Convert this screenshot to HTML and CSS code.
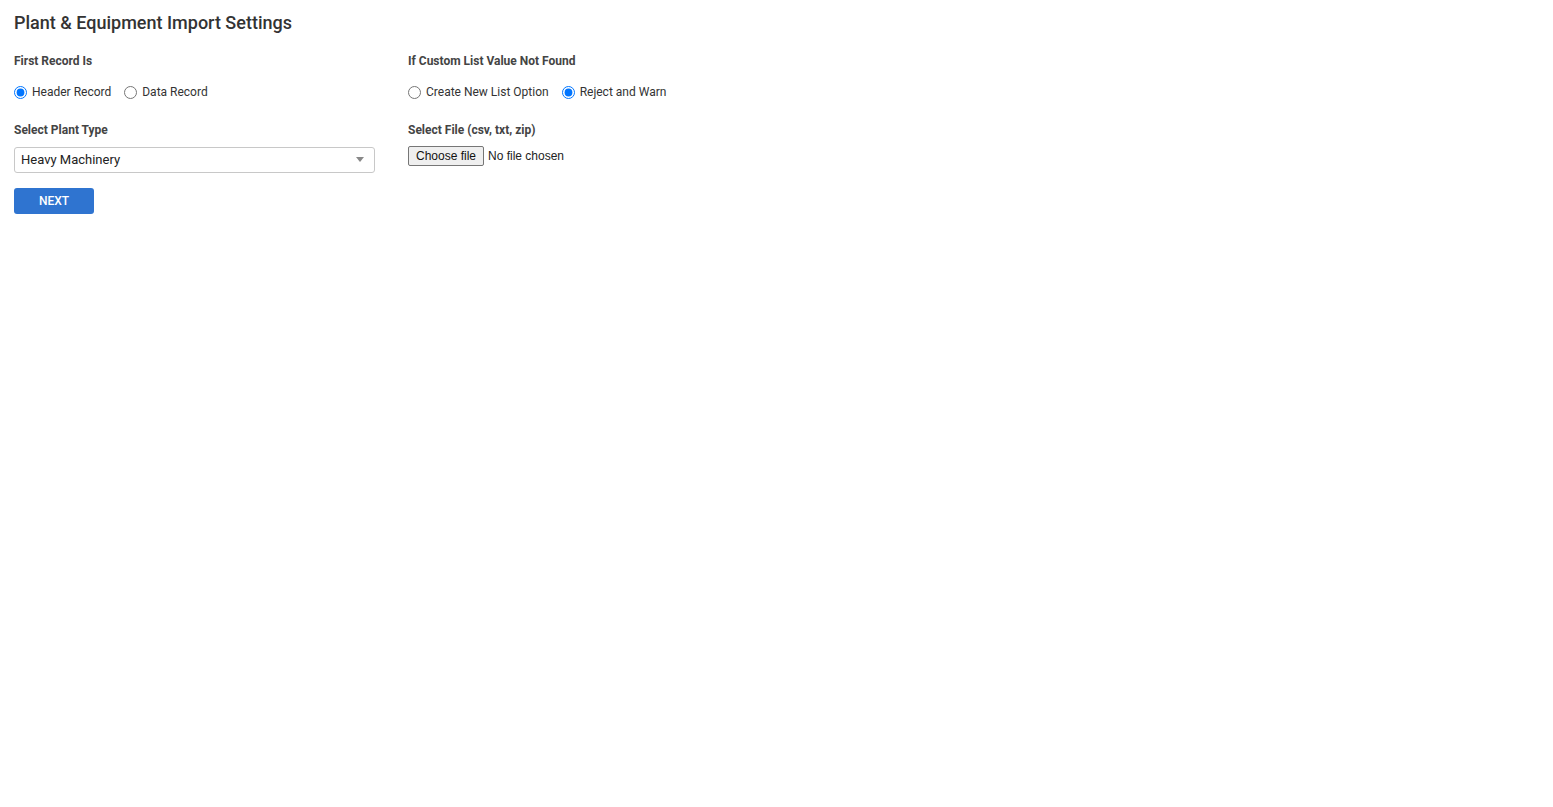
FILE: index.html
```
<!DOCTYPE html>
<html>
<head>
<meta charset="utf-8">
<link rel="stylesheet" href="styles.css">
</head>
<body>
<div class="page">
  <h1 class="title">Plant &amp; Equipment Import Settings</h1>
  <div class="grid">
    <div class="col">
      <div class="field">
        <div class="label">First Record Is</div>
        <div class="radios">
          <label class="radio"><input type="radio" name="first" checked><span>Header Record</span></label>
          <label class="radio"><input type="radio" name="first"><span>Data Record</span></label>
        </div>
      </div>
      <div class="field">
        <div class="label label-tight">Select Plant Type</div>
        <div class="select">
          <span class="select-text">Heavy Machinery</span>
          <span class="select-arrow"></span>
        </div>
      </div>
      <button class="btn">NEXT</button>
    </div>
    <div class="col">
      <div class="field">
        <div class="label">If Custom List Value Not Found</div>
        <div class="radios">
          <label class="radio"><input type="radio" name="custom"><span>Create New List Option</span></label>
          <label class="radio"><input type="radio" name="custom" checked><span>Reject and Warn</span></label>
        </div>
      </div>
      <div class="field">
        <div class="label label-file">Select File (csv, txt, zip)</div>
        <label class="file">
          <input class="file-input" type="file">
          <span class="file-btn">Choose file</span>
          <span class="file-name">No file chosen</span>
        </label>
      </div>
    </div>
  </div>
</div>
</body>
</html>
```
FILE: styles.css
```
* { box-sizing: border-box; }
body {
  margin: 0;
  font-family: Roboto, "Liberation Sans", sans-serif;
  color: #333;
  background: #fff;
}
.page {
  padding: 12px 14px;
}
.title {
  margin: 0;
  font-size: 18px;
  font-weight: 500;
  line-height: 22px;
  color: #333;
}
.grid {
  display: grid;
  grid-template-columns: 361px 300px;
  column-gap: 33px;
  margin-top: 19px;
}
.field {
  margin-bottom: 22px;
}
.label {
  font-size: 12px;
  font-weight: 700;
  color: #444;
  line-height: 16px;
  margin-bottom: 15px;
}
.label-tight {
  margin-bottom: 10px;
}
.label-file {
  margin-bottom: 8px;
}
.radios {
  display: flex;
  gap: 13px;
  height: 16px;
  align-items: center;
}
.radio {
  display: flex;
  align-items: center;
  font-size: 12px;
  color: #333;
  cursor: pointer;
}
.radio input {
  margin: 0 5px 0 0;
  width: 13px;
  height: 13px;
}
.select {
  position: relative;
  height: 26px;
  border: 1px solid #c8c8c8;
  border-radius: 3px;
  display: flex;
  align-items: center;
  padding: 0 6px 1px;
  font-size: 13px;
  color: #222;
  margin-top: -1px;
}
.select-arrow {
  position: absolute;
  right: 10px;
  top: 9px;
  width: 0;
  height: 0;
  border-left: 4px solid transparent;
  border-right: 4px solid transparent;
  border-top: 5px solid #888;
}
.btn {
  display: block;
  width: 80px;
  height: 26px;
  border: none;
  border-radius: 3px;
  background: #2f74d0;
  color: #fff;
  font-family: Roboto, "Liberation Sans", sans-serif;
  font-size: 12px;
  font-weight: 500;
  padding: 0;
  margin-top: -7px;
}
.file {
  display: flex;
  align-items: center;
  font-family: "Liberation Sans", Arial, sans-serif;
  font-size: 12px;
  color: #222;
  cursor: pointer;
}
.file-input {
  display: none;
}
.file-btn {
  display: inline-flex;
  align-items: center;
  justify-content: center;
  width: 76px;
  height: 20px;
  border: 1px solid #767676;
  border-radius: 2px;
  background: #efefef;
  color: #111;
  margin-right: 4px;
}
```
